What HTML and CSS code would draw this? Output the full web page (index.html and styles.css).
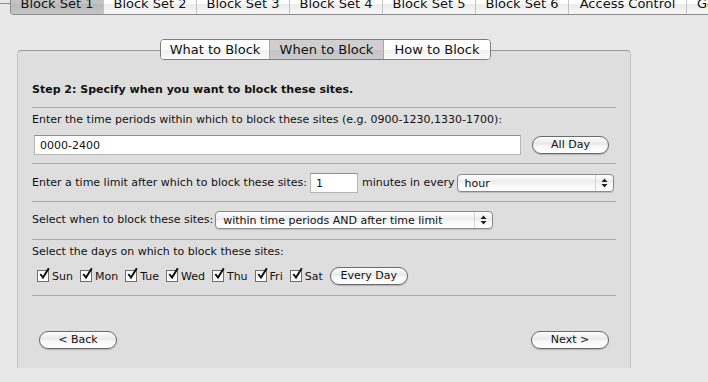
FILE: index.html
```html
<!DOCTYPE html>
<html lang="en">
<head>
    <meta charset="UTF-8">
    <title>Block Set 1 - When to Block</title>
    <link rel="stylesheet" href="styles.css">
</head>
<body>
    <div class="topbar">
        <div class="stub"></div>
        <div class="set-tabs">
            <div class="set-tab selected">Block Set 1</div>
            <div class="set-tab">Block Set 2</div>
            <div class="set-tab">Block Set 3</div>
            <div class="set-tab">Block Set 4</div>
            <div class="set-tab">Block Set 5</div>
            <div class="set-tab">Block Set 6</div>
            <div class="set-tab wide">Access Control</div>
            <div class="set-tab last">General</div>
        </div>
    </div>

    <div class="tabview">
        <div class="segments">
            <div class="segment what">What to Block</div>
            <div class="segment when selected">When to Block</div>
            <div class="segment how">How to Block</div>
        </div>
        <div class="panel">
            <div class="section step">
                <b>Step 2: Specify when you want to block these sites.</b>
            </div>

            <div class="section periods">
                <div class="label">Enter the time periods within which to block these sites (e.g. 0900-1230,1330-1700):</div>
                <div class="row">
                    <div class="field times">0000-2400</div>
                    <div class="button all-day">All Day</div>
                </div>
            </div>

            <div class="section limit">
                <div class="row">
                    <span class="label">Enter a time limit after which to block these sites:</span>
                    <div class="field minutes">1</div>
                    <span class="label">minutes in every</span>
                    <div class="popup hour">
                        <span class="popup-text">hour</span>
                        <span class="popup-arrows">
                            <svg width="7" height="10" viewBox="0 0 7 10"><path d="M3.5 0.5 L6.5 4 L0.5 4 Z M0.5 6 L6.5 6 L3.5 9.5 Z" fill="#222"/></svg>
                        </span>
                    </div>
                </div>
            </div>

            <div class="section mode">
                <div class="row">
                    <span class="label">Select when to block these sites:</span>
                    <div class="popup mode-popup">
                        <span class="popup-text">within time periods AND after time limit</span>
                        <span class="popup-arrows">
                            <svg width="7" height="10" viewBox="0 0 7 10"><path d="M3.5 0.5 L6.5 4 L0.5 4 Z M0.5 6 L6.5 6 L3.5 9.5 Z" fill="#222"/></svg>
                        </span>
                    </div>
                </div>
            </div>

            <div class="section days">
                <div class="label">Select the days on which to block these sites:</div>
                <div class="row day-row" id="day-row"></div>
            </div>

            <div class="nav">
                <div class="button back">&lt; Back</div>
                <div class="button next">Next &gt;</div>
            </div>
        </div>
    </div>

    <script>
        const days = ["Sun", "Mon", "Tue", "Wed", "Thu", "Fri", "Sat"];
        const tick = `<svg width="12" height="13" viewBox="0 0 12 13"><path d="M2.3 7 L5 10.5 L10.8 1.2" fill="none" stroke="#111" stroke-width="2"/></svg>`;
        document.getElementById("day-row").innerHTML = days.map(day => {
            return `<label class="day"><span class="check">${tick}</span>${day}</label>`;
        }).join("") + `<div class="button every-day">Every Day</div>`;
    </script>
</body>
</html>
```

FILE: styles.css
```css
body { margin: 0; background: #e8e8e8; font-family: 'DejaVu Sans', sans-serif; font-size: 11px; color: #111; overflow: hidden; }

/* top block set tabs, cut off by the window edge */
.topbar { display: flex; height: 16px; overflow: hidden; }
.stub { width: 10px; height: 3px; border-bottom: 1px solid #8a8a8a; flex: none; }
.set-tabs { display: flex; margin-top: -5px; height: 19px; border: 1px solid #8a8a8a; border-top: none; border-bottom-left-radius: 4px; overflow: hidden; flex: none; }
.set-tab { width: 92px; border-right: 1px solid #c4c4c4; font-size: 13px; line-height: 17px; text-align: center; background: linear-gradient(#ffffff 50%, #ececec 50%, #f6f6f6); white-space: nowrap; }
.set-tab.selected { background: linear-gradient(#c4c4c4 50%, #b9b9b9 50%, #c6c6c6); }
.set-tab.wide { width: 117px; }
.set-tab.last { width: 60px; text-align: left; padding-left: 10px; border-right: none; }

/* inner tab view */
.tabview { padding: 23px 0 0 17px; }
.segments { display: flex; width: 329px; margin: 0 0 -10px 143px; height: 19px; border: 1px solid #7d7d7d; border-radius: 4px; overflow: hidden; position: relative; z-index: 1; background: #fff; }
.segment { font-size: 13px; line-height: 19px; text-align: center; background: linear-gradient(#ffffff 50%, #f0f0f0 50%, #fafafa); }
.segment.what { width: 108px; border-right: 1px solid #a8a8a8; }
.segment.when { width: 113px; border-right: 1px solid #a8a8a8; }
.segment.how { flex: 1; }
.segment.selected { background: linear-gradient(#cfcfcf 50%, #c4c4c4 50%, #cbcbcb); }

.panel { width: 584px; height: 317px; padding: 0 14px; background: #dedede; border: 1px solid #c4c4c4; border-top-color: #9a9a9a; border-bottom: none; border-radius: 4px 4px 0 0; }

.section { border-bottom: 1px solid #a9a9a9; }
.section .label { line-height: 16px; white-space: nowrap; flex: none; }
.row { display: flex; align-items: center; }
.step { padding: 31px 0 9px; line-height: 16px; }
.periods { padding: 4px 0 8px; }
.periods .row { margin-top: 7px; }
.limit { padding: 9px 0 8px; }
.limit .row { height: 20px; }
.mode { padding: 9px 0 10px; }
.mode .row { height: 18px; }
.days { padding: 4px 0 10px; }
.days .row { margin-top: 7px; height: 18px; }

.field { height: 18px; line-height: 19px; padding: 0 5px; background: #fff; border: 1px solid #b5b5b5; border-top-color: #8e8e8e; box-sizing: content-box; flex: none; }
.field.times { width: 475px; margin-left: 2px; }
.field.minutes { width: 36px; margin: 0 4px 0 3px; }

.button { height: 16px; line-height: 16px; text-align: center; border: 1px solid #6a6a6a; border-radius: 9px; background: linear-gradient(#fdfdfd, #e9e9e9 45%, #f7f7f7 55%, #ffffff); box-shadow: 0 1px 1px rgba(0, 0, 0, 0.2); flex: none; }
.all-day { width: 75px; margin-left: 11px; }
.every-day { width: 76px; margin-left: 5px; }

.popup { display: flex; height: 16px; border: 1px solid #8a8a8a; border-radius: 4px; background: linear-gradient(#ffffff, #ececec 45%, #f6f6f6 55%, #ffffff); box-shadow: 0 1px 1px rgba(0, 0, 0, 0.15); }
.popup-text { flex: 1; line-height: 17px; padding-left: 7px; white-space: nowrap; }
.popup-arrows { width: 17px; border-left: 1px solid #d4d4d4; display: flex; align-items: center; justify-content: center; }
.hour { flex: 1; margin: 0 2px 0 2px; }
.mode-popup { width: 276px; margin-left: 2px; }

.day { display: flex; align-items: center; margin-left: 5px; margin-right: 2px; }
.check { width: 10px; height: 10px; margin-right: 3px; background: #fff; border: 1px solid #6e6e6e; position: relative; }
.check svg { position: absolute; left: 0; top: -4px; }

.nav { display: flex; justify-content: space-between; padding: 35px 7px 0 7px; }
.back, .next { width: 76px; }
```
